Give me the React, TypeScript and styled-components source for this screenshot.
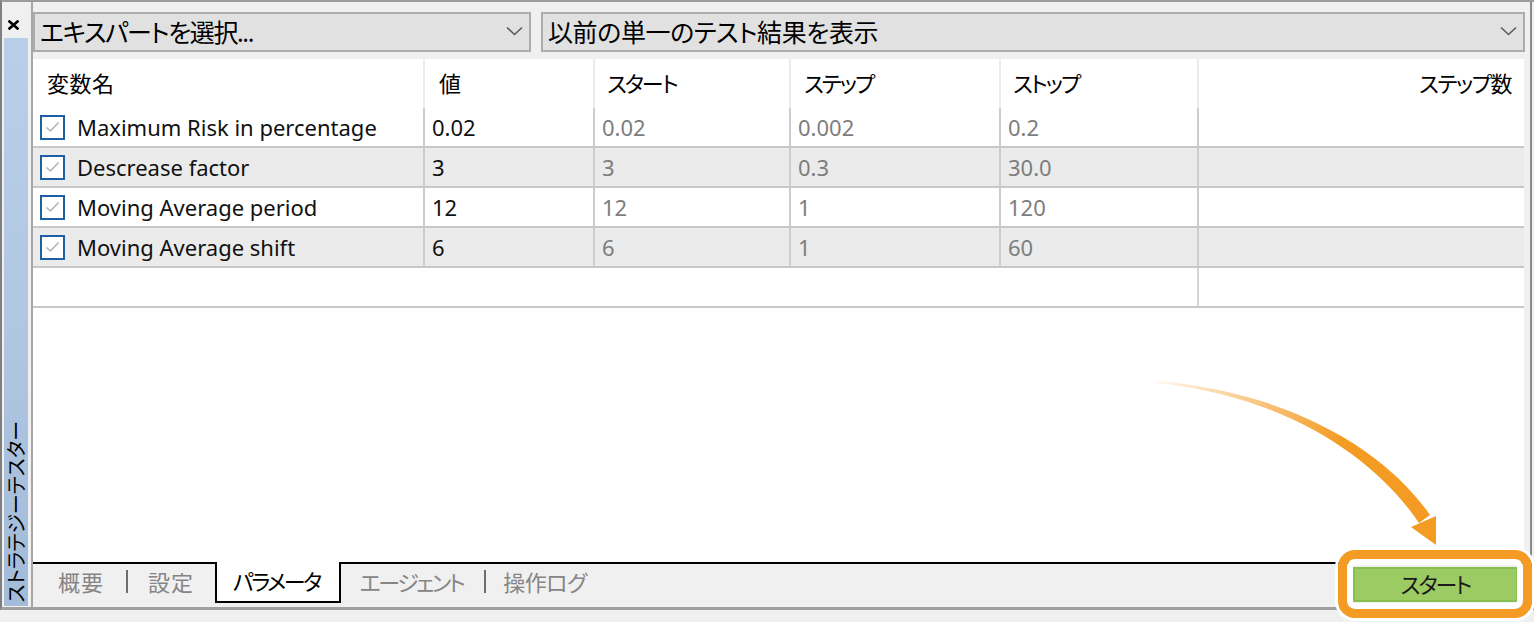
import React from "react";
import styled, { createGlobalStyle } from "styled-components";

const GlobalStyle = createGlobalStyle`
  html, body { margin: 0; padding: 0; background: #f0f0f0; }
  body {
    font-family: "Noto Sans", "Noto Sans CJK JP", sans-serif;
    font-feature-settings: "palt";
    -webkit-font-smoothing: antialiased;
  }
  #root { width: 1534px; height: 622px; }
`;

const COLS = "392px 170px 196px 210px 198px 1fr";

const Page = styled.div`
  position: relative;
  width: 1534px;
  height: 622px;
  background: #f0f0f0;
  overflow: hidden;
`;

const Window = styled.div`
  display: flex;
  height: 610px;
  box-sizing: border-box;
  border-top: 2px solid #9c9c9c;
  border-left: 2px solid #7f7f7f;
  border-bottom: 3px solid #a0a0a0;
  padding-right: 2px;
  background: #f0f0f0;
`;

const Sidebar = styled.div`
  width: 29px;
  flex-shrink: 0;
  display: flex;
  flex-direction: column;
`;

const CloseBox = styled.div`
  height: 36px;
  box-sizing: border-box;
  padding: 11px 0 0 6px;
`;

const BlueBar = styled.div`
  flex: 1;
  width: 24px;
  margin: 0 0 1px 2px;
  background: linear-gradient(to bottom, #b9cfe9 0%, #b0c7e2 50%, #a2bbd8 100%);
  display: flex;
  flex-direction: column;
  justify-content: flex-end;
  align-items: center;
`;

const VerticalLabel = styled.div`
  writing-mode: vertical-rl;
  text-orientation: sideways;
  transform: rotate(180deg);
  font-family: "Noto Sans CJK JP", sans-serif;
  font-size: 20px;
  line-height: 24px;
  color: #000;
  padding-top: 4px;
`;

const Main = styled.div`
  flex: 1;
  display: flex;
  flex-direction: column;
  border-left: 2px solid #a6a6a6;
  border-right: 2px solid #8a8a8a;
  min-width: 0;
`;

const Toolbar = styled.div`
  display: grid;
  grid-template-columns: 498px 1fr;
  gap: 10px;
  height: 57px;
  box-sizing: border-box;
  padding: 10px 5px 0 0;
`;

const Combo = styled.div<{ $ls?: number }>`
  height: 40px;
  box-sizing: border-box;
  border: 2px solid #acacac;
  background: #e1e1e1;
  display: flex;
  align-items: center;
  justify-content: space-between;
  padding: 0 6px 2px 5px;
  font-size: 25px;
  letter-spacing: ${(p) => p.$ls ?? -1}px;
  color: #000;
  white-space: nowrap;
`;

const TableArea = styled.div`
  flex: 1;
  background: #fff;
  margin-right: 6px;
  display: flex;
  flex-direction: column;
`;

const HeaderRow = styled.div`
  display: grid;
  grid-template-columns: ${COLS};
  height: 49px;
`;

const HeaderCell = styled.div<{ $right?: boolean; $pad?: number; $ls?: number }>`
  display: flex;
  align-items: center;
  justify-content: ${(p) => (p.$right ? "flex-end" : "flex-start")};
  padding: ${(p) => (p.$right ? "0 13px 4px 0" : `0 0 4px ${p.$pad ?? 12}px`)};
  border-right: ${(p) => (p.$right ? "none" : "2px solid #ececec")};
  font-size: 22px;
  letter-spacing: ${(p) => p.$ls ?? -2}px;
  color: #000;
  white-space: nowrap;
`;

const Row = styled.div<{ $alt?: boolean }>`
  display: grid;
  grid-template-columns: ${COLS};
  height: 40px;
  box-sizing: border-box;
  border-bottom: 2px solid #c8c8c8;
  background: ${(p) => (p.$alt ? "#ebebeb" : "#fff")};
`;

const Cell = styled.div<{ $muted?: boolean; $last?: boolean }>`
  display: flex;
  align-items: center;
  padding-left: 7px;
  border-right: ${(p) => (p.$last ? "none" : "2px solid #cdcdcd")};
  font-size: 22px;
  color: ${(p) => (p.$muted ? "#7d7d7d" : "#111")};
  white-space: nowrap;
  overflow: hidden;
`;

const SpanCell = styled.div`
  grid-column: span 5;
  border-right: 2px solid #d6d6d6;
`;

const CheckBox = styled.span`
  width: 25px;
  height: 25px;
  box-sizing: border-box;
  border: 2px solid #1c5fa3;
  background: #fff;
  display: inline-flex;
  align-items: center;
  justify-content: center;
  margin-right: 12px;
  flex-shrink: 0;
`;

const BottomBar = styled.div`
  height: 45px;
  box-sizing: border-box;
  border-top: 2px solid #000;
  display: flex;
  align-items: flex-start;
  background: #f0f0f0;
`;

const TabStrip = styled.div`
  display: flex;
  align-items: flex-start;
  padding-left: 4px;
`;

const Tab = styled.div<{ $ls?: number; $pl?: number; $pr?: number }>`
  padding: 0 ${(p) => p.$pr ?? 21}px 5px ${(p) => p.$pl ?? 21}px;
  height: 38px;
  box-sizing: border-box;
  display: flex;
  align-items: center;
  font-size: 22px;
  letter-spacing: ${(p) => p.$ls ?? 1}px;
  color: #858585;
  white-space: nowrap;
`;

const ActiveTab = styled.div`
  margin-top: -2px;
  height: 41px;
  box-sizing: border-box;
  padding: 0 19px 4px 16px;
  background: #fff;
  border: 2px solid #000;
  border-top: none;
  display: flex;
  align-items: center;
  font-size: 22px;
  letter-spacing: -2.5px;
  color: #000;
  white-space: nowrap;
`;

const Sep = styled.span`
  width: 2px;
  height: 23px;
  margin-top: 6px;
  background: #6e6e6e;
`;

const ButtonWrap = styled.div`
  position: relative;
  margin: 3px 12px 0 auto;
`;

const StartButton = styled.div`
  width: 165px;
  height: 35px;
  box-sizing: border-box;
  background: #9bcb62;
  border: 2px solid #87c04e;
  display: flex;
  align-items: center;
  justify-content: center;
  padding-bottom: 3px;
  font-size: 22px;
  letter-spacing: -2px;
  color: #1a1a1a;
`;

const Highlight = styled.div`
  position: absolute;
  top: -17px;
  left: -15px;
  right: -14px;
  bottom: -16px;
  border: 9px solid #f39b22;
  border-radius: 17px;
  box-shadow: 0 0 0 3px #fff, inset 0 0 0 6px #fff;
  pointer-events: none;
`;

const ArrowOverlay = styled.svg`
  position: absolute;
  left: 1150px;
  top: 375px;
  pointer-events: none;
`;

const Chevron = () => (
  <svg width="17" height="10" viewBox="0 0 17 10">
    <polyline points="1,1.5 8.5,8.5 16,1.5" fill="none" stroke="#5a5a5a" strokeWidth="1.6" />
  </svg>
);

const Check = () => (
  <svg width="15" height="12" viewBox="0 0 15 12">
    <polyline points="1.5,6.5 5.5,10 13.5,1.5" fill="none" stroke="#b4b4b4" strokeWidth="1.6" />
  </svg>
);

const CloseIcon = () => (
  <svg width="11" height="10" viewBox="0 0 11 10">
    <path d="M1.5 1.5 L9.5 8.5 M9.5 1.5 L1.5 8.5" stroke="#000" strokeWidth="2.6" strokeLinecap="square" />
  </svg>
);

type Param = { name: string; value: string; start: string; step: string; stop: string };

const params: Param[] = [
  { name: "Maximum Risk in percentage", value: "0.02", start: "0.02", step: "0.002", stop: "0.2" },
  { name: "Descrease factor", value: "3", start: "3", step: "0.3", stop: "30.0" },
  { name: "Moving Average period", value: "12", start: "12", step: "1", stop: "120" },
  { name: "Moving Average shift", value: "6", start: "6", step: "1", stop: "60" },
];

export default function App() {
  return (
    <Page>
      <GlobalStyle />
      <Window>
        <Sidebar>
          <CloseBox>
            <CloseIcon />
          </CloseBox>
          <BlueBar>
            <VerticalLabel>ストラテジーテスター</VerticalLabel>
          </BlueBar>
        </Sidebar>
        <Main>
          <Toolbar>
            <Combo $ls={-1.4}>
              <span>エキスパートを選択...</span>
              <Chevron />
            </Combo>
            <Combo $ls={-0.4}>
              <span>以前の単一のテスト結果を表示</span>
              <Chevron />
            </Combo>
          </Toolbar>
          <TableArea>
            <HeaderRow>
              <HeaderCell $pad={14} $ls={0.5}>変数名</HeaderCell>
              <HeaderCell $pad={14} $ls={0}>値</HeaderCell>
              <HeaderCell $pad={12}>スタート</HeaderCell>
              <HeaderCell $pad={13}>ステップ</HeaderCell>
              <HeaderCell $pad={12}>ストップ</HeaderCell>
              <HeaderCell $right $ls={-1.5}>ステップ数</HeaderCell>
            </HeaderRow>
            {params.map((p, i) => (
              <Row key={p.name} $alt={i % 2 === 1}>
                <Cell>
                  <CheckBox>
                    <Check />
                  </CheckBox>
                  {p.name}
                </Cell>
                <Cell>{p.value}</Cell>
                <Cell $muted>{p.start}</Cell>
                <Cell $muted>{p.step}</Cell>
                <Cell $muted>{p.stop}</Cell>
                <Cell $last />
              </Row>
            ))}
            <Row>
              <SpanCell />
              <Cell $last />
            </Row>
          </TableArea>
          <BottomBar>
            <TabStrip>
              <Tab $pr={22}>概要</Tab>
              <Sep />
              <Tab $pl={20}>設定</Tab>
              <ActiveTab>パラメータ</ActiveTab>
              <Tab $ls={-2.5} $pl={19}>エージェント</Tab>
              <Sep />
              <Tab $ls={-0.5} $pl={17}>操作ログ</Tab>
            </TabStrip>
            <ButtonWrap>
              <StartButton>スタート</StartButton>
              <Highlight />
            </ButtonWrap>
          </BottomBar>
        </Main>
      </Window>
      <ArrowOverlay width="300" height="180" viewBox="0 0 300 180">
        <defs>
          <linearGradient id="arrowFade" gradientUnits="userSpaceOnUse" x1="7" y1="7" x2="190" y2="70">
            <stop offset="0" stopColor="#f39b22" stopOpacity="0.08" />
            <stop offset="1" stopColor="#f39b22" stopOpacity="1" />
          </linearGradient>
        </defs>
        <path
          d="M7,6 C140,17 236,76 280,140 L269,148 C226,84 139,22 7,8 Z"
          fill="url(#arrowFade)"
        />
        <path d="M261,152 L286,141 L286,170 Z" fill="#f39b22" />
      </ArrowOverlay>
    </Page>
  );
}
